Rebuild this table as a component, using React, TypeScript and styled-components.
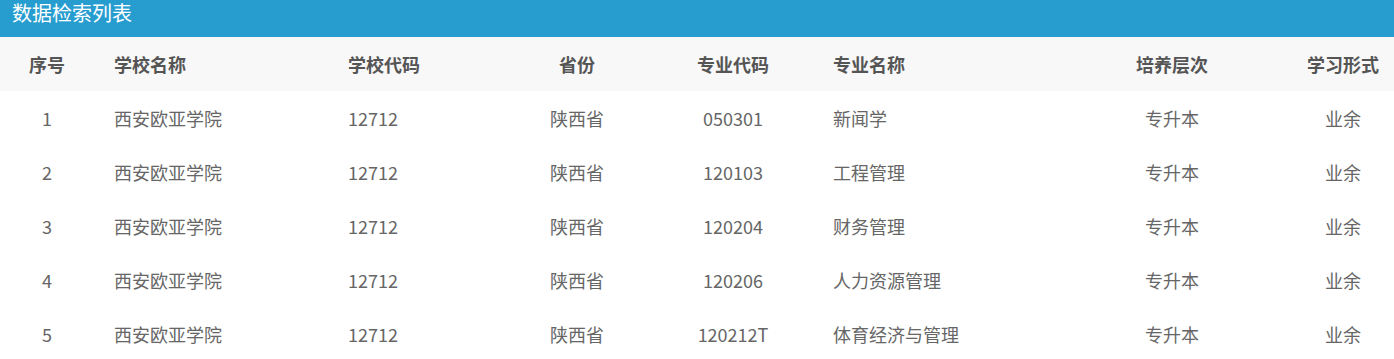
import React from 'react'
import styled, { createGlobalStyle } from 'styled-components'

const GlobalStyle = createGlobalStyle`
  body {
    margin: 0;
    background: #ffffff;
    font-family: "Noto Sans CJK SC", "Noto Sans", sans-serif;
  }
`

const Panel = styled.div`
  width: 1394px;
  background: #fff;
`

const TitleBar = styled.div`
  height: 37px;
  background: #279dcf;
  color: #ffffff;
  font-size: 20px;
  line-height: 26px;
  padding: 0 12px;
  box-sizing: border-box;
`

const Row = styled.div<{ $head?: boolean }>`
  display: grid;
  grid-template-columns: 94px 234px 173px 152px 160px 239px 240px 102px;
  height: 54px;
  align-items: center;
  background: ${(p) => (p.$head ? '#f8f8f8' : '#ffffff')};
  color: ${(p) => (p.$head ? '#555555' : '#666666')};
  font-weight: ${(p) => (p.$head ? 700 : 400)};
  font-size: 18px;
`

const Cell = styled.div<{ $align?: 'left' | 'center' }>`
  text-align: ${(p) => p.$align ?? 'center'};
  padding-left: ${(p) => (p.$align === 'left' ? '20px' : '0')};
  white-space: nowrap;
`

const columns: { label: string; align: 'left' | 'center' }[] = [
  { label: '序号', align: 'center' },
  { label: '学校名称', align: 'left' },
  { label: '学校代码', align: 'left' },
  { label: '省份', align: 'center' },
  { label: '专业代码', align: 'center' },
  { label: '专业名称', align: 'left' },
  { label: '培养层次', align: 'center' },
  { label: '学习形式', align: 'center' },
]

const majors = [
  ['050301', '新闻学'],
  ['120103', '工程管理'],
  ['120204', '财务管理'],
  ['120206', '人力资源管理'],
  ['120212T', '体育经济与管理'],
]

const rows = majors.map(([code, name], i) => [
  String(i + 1),
  '西安欧亚学院',
  '12712',
  '陕西省',
  code,
  name,
  '专升本',
  '业余',
])

export default function App() {
  return (
    <>
      <GlobalStyle />
      <Panel>
        <TitleBar>数据检索列表</TitleBar>
        <Row $head>
          {columns.map((c) => (
            <Cell key={c.label} $align={c.align}>
              {c.label}
            </Cell>
          ))}
        </Row>
        {rows.map((r, i) => (
          <Row key={i}>
            {r.map((v, j) => (
              <Cell key={j} $align={columns[j].align}>
                {v}
              </Cell>
            ))}
          </Row>
        ))}
      </Panel>
    </>
  )
}
